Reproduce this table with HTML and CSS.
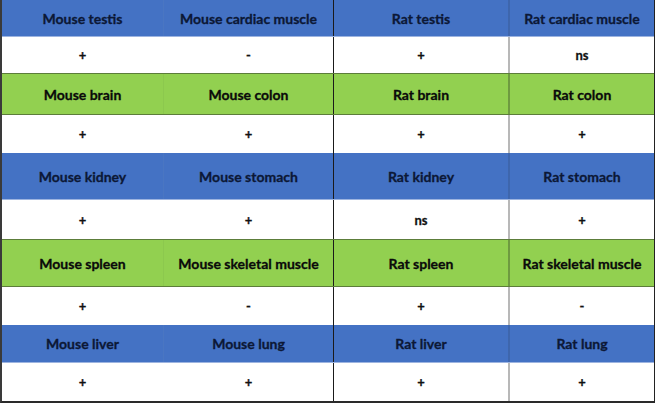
FILE: index.html
```html
<!DOCTYPE html>
<html>
<head>
<meta charset="utf-8">
<link rel="stylesheet" href="styles.css">
</head>
<body>
<div class="table">
  <div class="row head blue h37"><div class="cell">Mouse testis</div><div class="cell">Mouse cardiac muscle</div><div class="cell">Rat testis</div><div class="cell">Rat cardiac muscle</div></div>
  <div class="row val h36"><div class="cell">+</div><div class="cell">-</div><div class="cell">+</div><div class="cell">ns</div></div>
  <div class="row head green h42"><div class="cell">Mouse brain</div><div class="cell">Mouse colon</div><div class="cell">Rat brain</div><div class="cell">Rat colon</div></div>
  <div class="row val h38"><div class="cell">+</div><div class="cell">+</div><div class="cell">+</div><div class="cell">+</div></div>
  <div class="row head blue h47"><div class="cell">Mouse kidney</div><div class="cell">Mouse stomach</div><div class="cell">Rat kidney</div><div class="cell">Rat stomach</div></div>
  <div class="row val h39"><div class="cell">+</div><div class="cell">+</div><div class="cell">ns</div><div class="cell">+</div></div>
  <div class="row head green h48"><div class="cell">Mouse spleen</div><div class="cell">Mouse skeletal muscle</div><div class="cell">Rat spleen</div><div class="cell">Rat skeletal muscle</div></div>
  <div class="row val h38"><div class="cell">+</div><div class="cell">-</div><div class="cell">+</div><div class="cell">-</div></div>
  <div class="row head blue h38"><div class="cell">Mouse liver</div><div class="cell">Mouse lung</div><div class="cell">Rat liver</div><div class="cell">Rat lung</div></div>
  <div class="row val h38"><div class="cell">+</div><div class="cell">+</div><div class="cell">+</div><div class="cell">+</div></div>
</div>
</body>
</html>
```

FILE: styles.css
```css
html, body {
  margin: 0;
  padding: 0;
  background: #ffffff;
}

.table {
  width: 652px;
  border-left: 2px solid #3a3a3a;
  border-right: 1px solid #222222;
  border-bottom: 2px solid #2a2a2a;
  font-family: "Lato", "Open Sans", "Liberation Sans", sans-serif;
  font-weight: 700;
  font-size: 14px;
  color: #111111;
  -webkit-text-stroke: 0.3px currentColor;
}

.row {
  display: grid;
  grid-template-columns: 161px 170px 175px 146px;
  box-sizing: border-box;
}

.cell {
  display: flex;
  align-items: center;
  justify-content: center;
  white-space: nowrap;
}

.cell:nth-child(2) {
  border-left: 1px solid transparent;
}
.cell:nth-child(3) {
  border-left: 1px solid #1a1a1a;
}
.cell:nth-child(4) {
  border-left: 2px solid #b8b8b8;
}

.blue {
  background: #4472c4;
  color: #0c1836;
  border-bottom: 1px solid #9db4e0;
}
.blue .cell:nth-child(2) { border-left-color: #4a76c2; }
.blue .cell:nth-child(4) { border-left-color: #3e66ad; }

.green {
  background: #92d050;
  color: #0a0a0a;
  border-top: 1px solid #5c7d3a;
  border-bottom: 1px solid #5c7d3a;
}
.green .cell:nth-child(2) { border-left-color: #8cc84e; }
.green .cell:nth-child(4) { border-left-color: #6e9a40; }

.val .cell {
  font-size: 13px;
}

.h36 { height: 36px; }
.h37 { height: 37px; }
.h38 { height: 38px; }
.h39 { height: 39px; }
.h42 { height: 42px; }
.h47 { height: 47px; }
.h48 { height: 48px; }
```
